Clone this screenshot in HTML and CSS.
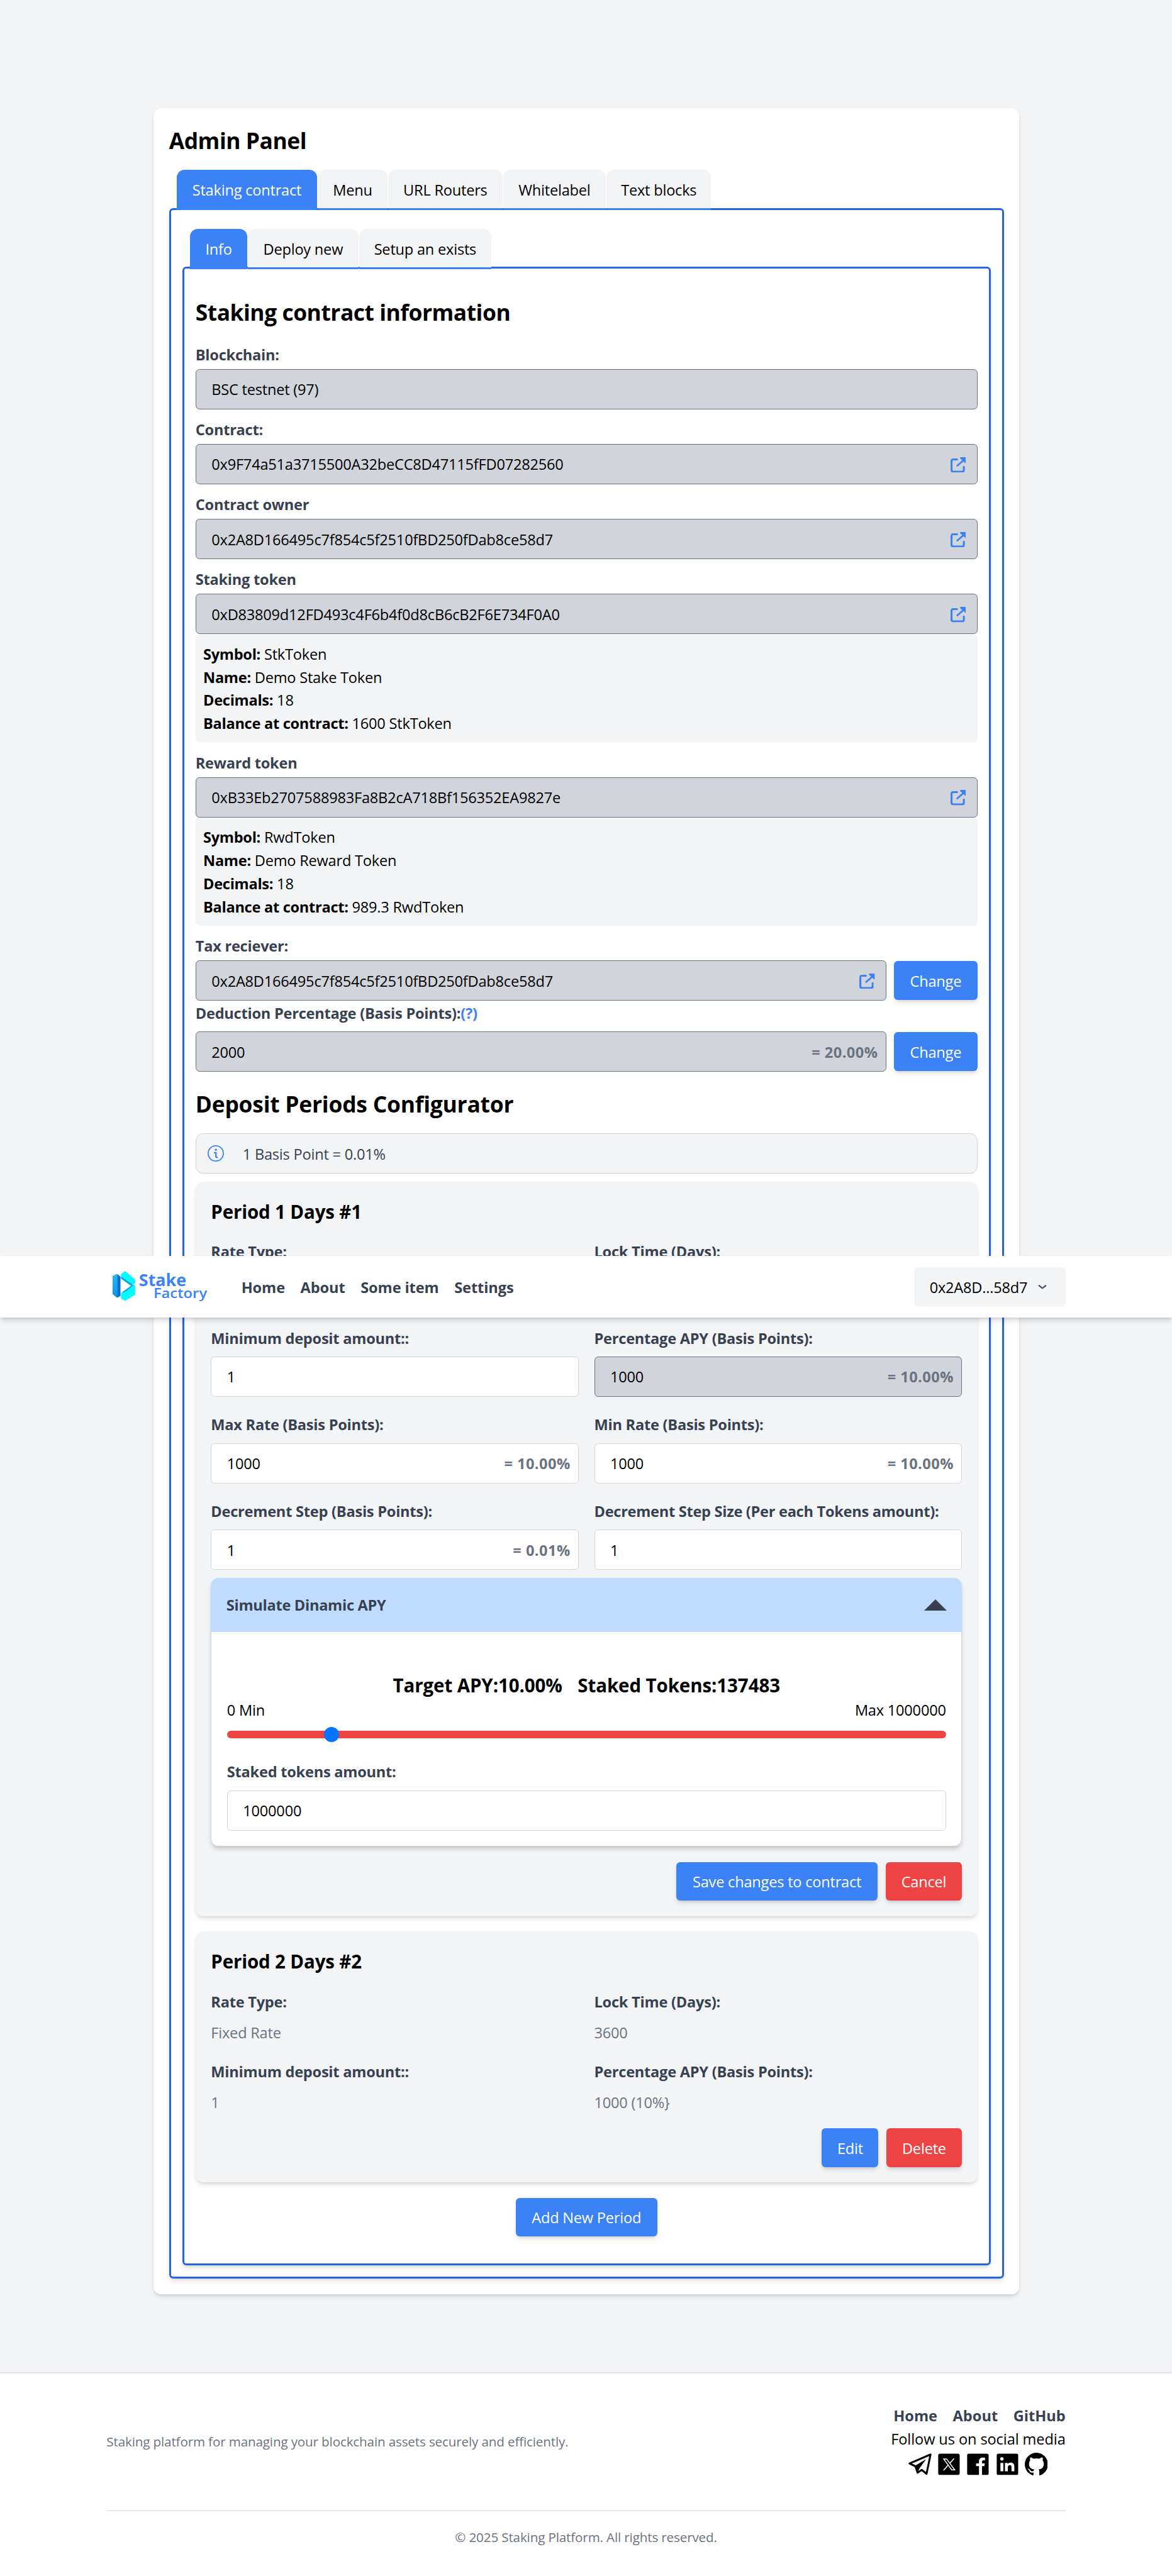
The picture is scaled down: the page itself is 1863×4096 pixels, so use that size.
FILE: index.html
```html
<!DOCTYPE html>
<html lang="en">
<head>
<meta charset="utf-8">
<title>Stake Factory - Admin Panel</title>
<link rel="stylesheet" href="styles.css">
</head>
<body>
<svg class="defs" width="0" height="0">
  <symbol id="ext" viewBox="0 0 32 32">
    <path d="M13.5 4.5H5.5Q2 4.500 2 8V26.500Q2 30 5.500 30H24Q27.500 30 27.500 26.500V20" fill="none" stroke="currentColor" stroke-width="4" stroke-linecap="round"/>
    <path d="M14 17.500L25 8" fill="none" stroke="currentColor" stroke-width="3.600" stroke-linecap="round"/>
    <path d="M21 0H30.500Q32 0 32 1.500V10.500Q32 12.600 30 11.600L20 2.600Q18.800 .6 21 0Z" fill="currentColor"/>
  </symbol>
</svg>

<header class="topbar">
  <div class="container topbar-row">
    <svg class="logo" viewBox="0 0 212 64">
      <defs><linearGradient id="lg" x1="0" y1="0" x2="0" y2="1"><stop offset="0" stop-color="#2ab4ee"/><stop offset=".55" stop-color="#12a8f0"/><stop offset="1" stop-color="#0f8fe0"/></linearGradient></defs>
      <path d="M12 9.800L8.300 6.200 0 10V48L8.300 54.800 11 55Z" fill="url(#lg)"/>
      <path d="M10 6.300L16.300 12V51.500L10 55Z" fill="#0b6fd2"/>
      <path d="M17.300 6.500L25.700 0 46.700 18V25L38 30.500 17.300 14Z" fill="#00fcff"/>
      <path d="M17.300 11.500L41.500 28.300 38 30.500 17.300 15.500Z" fill="#0fa3ea"/>
      <path d="M17.300 46L44.500 28.500 46.700 30V49L25.700 62 17.300 56.500Z" fill="#00fcff"/>
      <path d="M19.500 44L40.500 29 44 29 27 42.500 21 44.500Z" fill="#0fa3ea"/>
      <text x="54.500" y="31" class="logo-a" textLength="98" lengthAdjust="spacingAndGlyphs">Stake</text>
      <text x="84.500" y="55.700" class="logo-b" textLength="111" lengthAdjust="spacingAndGlyphs">Factory</text>
    </svg>
    <nav class="nav"><a>Home</a><a>About</a><a>Some item</a><a>Settings</a></nav>
    <button class="account"><span>0x2A8D...58d7</span><svg class="chev" viewBox="0 0 18 12"><path d="M2 3L9 8.500 16 3" fill="none" stroke="#4b5563" stroke-width="3" stroke-linecap="round" stroke-linejoin="round"/></svg></button>
  </div>
</header>

<main class="page">
  <section class="card">
    <h1 class="title">Admin Panel</h1>
    <div class="tabs tabs-outer">
      <button class="tab active">Staking contract</button><button class="tab">Menu</button><button class="tab">URL Routers</button><button class="tab">Whitelabel</button><button class="tab">Text blocks</button>
    </div>
    <div class="panel panel-outer">
      <div class="tabs tabs-inner">
        <button class="tab active">Info</button><button class="tab">Deploy new</button><button class="tab">Setup an exists</button>
      </div>
      <div class="panel panel-inner">
        <h2 class="title">Staking contract information</h2>

        <div class="field">
          <label class="label">Blockchain:</label>
          <div class="input off"><span>BSC testnet (97)</span></div>
        </div>
        <div class="field">
          <label class="label">Contract:</label>
          <div class="input off"><span>0x9F74a51a3715500A32beCC8D47115fFD07282560</span><svg class="ext"><use href="#ext"/></svg></div>
        </div>
        <div class="field">
          <label class="label">Contract owner</label>
          <div class="input off"><span>0x2A8D166495c7f854c5f2510fBD250fDab8ce58d7</span><svg class="ext"><use href="#ext"/></svg></div>
        </div>
        <div class="field">
          <label class="label">Staking token</label>
          <div class="input off"><span>0xD83809d12FD493c4F6b4f0d8cB6cB2F6E734F0A0</span><svg class="ext"><use href="#ext"/></svg></div>
          <div class="token">
            <p><b>Symbol:</b> StkToken</p>
            <p><b>Name:</b> Demo Stake Token</p>
            <p><b>Decimals:</b> 18</p>
            <p><b>Balance at contract:</b> 1600 StkToken</p>
          </div>
        </div>
        <div class="field">
          <label class="label">Reward token</label>
          <div class="input off"><span>0xB33Eb2707588983Fa8B2cA718Bf156352EA9827e</span><svg class="ext"><use href="#ext"/></svg></div>
          <div class="token">
            <p><b>Symbol:</b> RwdToken</p>
            <p><b>Name:</b> Demo Reward Token</p>
            <p><b>Decimals:</b> 18</p>
            <p><b>Balance at contract:</b> 989.3 RwdToken</p>
          </div>
        </div>
        <div>
          <label class="label">Tax reciever:</label>
          <div class="row">
            <div class="input off"><span>0x2A8D166495c7f854c5f2510fBD250fDab8ce58d7</span><svg class="ext"><use href="#ext"/></svg></div>
            <button class="btn change">Change</button>
          </div>
        </div>
        <div>
          <label class="label wide">Deduction Percentage (Basis Points):<a class="help">(?)</a></label>
          <div class="row">
            <div class="input off"><span>2000</span><b class="pct">= 20.00%</b></div>
            <button class="btn change">Change</button>
          </div>
        </div>

        <h2 class="title section">Deposit Periods Configurator</h2>
        <div class="note">
          <svg class="info" viewBox="0 0 34 34" fill="none" stroke="#3b82f6"><circle cx="17" cy="17" r="15.800" stroke-width="2.300"/><circle cx="17.200" cy="9.500" r="2.200" fill="#3b82f6" stroke="none"/><path d="M14.300 15.500H17.300V23.500Q17.300 25.500 20 25.300" stroke-width="3" stroke-linecap="round" stroke-linejoin="round"/></svg>
          <span>1 Basis Point = 0.01%</span>
        </div>

        <article class="period first">
          <h3 class="subtitle">Period 1 Days #1</h3>
          <div class="grid">
            <div><label class="label wide">Rate Type:</label><div class="input"></div></div>
            <div><label class="label wide">Lock Time (Days):</label><div class="input"></div></div>
            <div><label class="label wide">Minimum deposit amount::</label><div class="input"><span>1</span></div></div>
            <div><label class="label wide">Percentage APY (Basis Points):</label><div class="input off"><span>1000</span><b class="pct">= 10.00%</b></div></div>
            <div><label class="label wide">Max Rate (Basis Points):</label><div class="input"><span>1000</span><b class="pct">= 10.00%</b></div></div>
            <div><label class="label wide">Min Rate (Basis Points):</label><div class="input"><span>1000</span><b class="pct">= 10.00%</b></div></div>
            <div><label class="label wide">Decrement Step (Basis Points):</label><div class="input"><span>1</span><b class="pct">= 0.01%</b></div></div>
            <div><label class="label wide long">Decrement Step Size (Per each Tokens amount):</label><div class="input"><span>1</span></div></div>
          </div>
          <div class="sim">
            <div class="sim-head"><b>Simulate Dinamic APY</b><i class="tri"></i></div>
            <div class="sim-body">
              <div class="sim-title"><span>Target APY:10.00%</span><span>Staked Tokens:137483</span></div>
              <div class="limits"><span>0 Min</span><span>Max 1000000</span></div>
              <div class="track"><i class="thumb" style="margin-left:13.500%"></i></div>
              <label class="label wide">Staked tokens amount:</label>
              <div class="input"><span>1000000</span></div>
            </div>
          </div>
          <div class="actions"><button class="btn save">Save changes to contract</button><button class="btn red cancel">Cancel</button></div>
        </article>

        <article class="period">
          <h3 class="subtitle">Period 2 Days #2</h3>
          <div class="grid">
            <div><label class="label wide">Rate Type:</label><p class="value">Fixed Rate</p></div>
            <div><label class="label wide">Lock Time (Days):</label><p class="value">3600</p></div>
            <div><label class="label wide">Minimum deposit amount::</label><p class="value">1</p></div>
            <div><label class="label wide">Percentage APY (Basis Points):</label><p class="value">1000 (10%}</p></div>
          </div>
          <div class="actions"><button class="btn edit">Edit</button><button class="btn red delete">Delete</button></div>
        </article>

        <div class="center"><button class="btn add">Add New Period</button></div>
      </div>
    </div>
  </section>
</main>

<footer class="footer">
  <div class="container">
    <div class="foot-row">
      <p class="small">Staking platform for managing your blockchain assets securely and efficiently.</p>
      <div class="foot-right">
        <nav class="foot-nav"><a>Home</a><a>About</a><a>GitHub</a></nav>
        <p class="follow">Follow us on social media</p>
        <div class="social">
          <svg viewBox="0 0 48 48"><path d="M45.800 3.600L2.300 22.300 14.500 28 19 41.300 27.500 35.500 37.500 43.700Z" fill="none" stroke="#000" stroke-width="4" stroke-linejoin="round"/><path d="M36.500 13.300L13.500 27 18.500 42.500 22.800 32.500Z"/></svg>
          <svg viewBox="0 0 48 48"><rect x="1.800" y="2" width="44.400" height="44" rx="3.500"/><path d="M34.500 12L12.800 36.500" stroke="#fff" stroke-width="2.200"/><path d="M13.200 12.900H19.200L36 35.500H29.700Z" fill="#000" stroke="#fff" stroke-width="1.900"/></svg>
          <svg viewBox="0 0 48 48"><rect x="1.800" y="2" width="44.400" height="44" rx="3.500"/><path fill="#fff" d="M26.300 46.500V27.700H20.300V22H26.300V18C26.300 12.500 29.500 10.200 34 10.200H38.700V15.600H35.500C33 15.600 32.600 16.800 32.600 18.800V22H38.300L37.500 27.700H32.600V46.500Z"/></svg>
          <svg viewBox="0 0 48 48"><rect x="1.800" y="2" width="44.400" height="44" rx="3.500"/><circle cx="12.500" cy="12.700" r="3.500" fill="#fff"/><path fill="#fff" d="M9.500 21H15.500V38.300H9.500ZM18.800 21H24.400V23.400C25.600 21.500 27.700 20.600 30.300 20.600 36.300 20.600 38.300 24 38.300 29.500V38.300H32.400V30.500C32.400 27.500 31.800 25.800 29 25.800 26.200 25.800 24.800 27.300 24.800 30.500V38.300H18.800Z"/></svg>
          <svg viewBox="0 0 16 16"><path d="M8 0C3.580 0 0 3.580 0 8c0 3.540 2.290 6.530 5.470 7.590.4.070.55-.17.55-.38 0-.19-.01-.82-.01-1.490-2.010.37-2.530-.49-2.690-.94-.09-.23-.48-.94-.82-1.130-.28-.15-.68-.52-.01-.53.63-.01 1.080.58 1.230.82.72 1.210 1.870.87 2.330.66.07-.52.28-.87.51-1.070-1.780-.2-3.640-.89-3.640-3.950 0-.87.31-1.590.82-2.150-.08-.2-.36-1.020.08-2.120 0 0 .67-.21 2.200.82.64-.18 1.320-.27 2-.27s1.360.09 2 .27c1.530-1.040 2.200-.82 2.200-.82.44 1.100.16 1.920.08 2.120.51.56.82 1.270.82 2.150 0 3.070-1.870 3.750-3.650 3.950.29.25.54.73.54 1.480 0 1.070-.01 1.930-.01 2.200 0 .21.15.46.55.38A8.010 8.010 0 0 0 16 8c0-4.420-3.580-8-8-8"/></svg>
        </div>
      </div>
    </div>
    <p class="copy small">© 2025 Staking Platform. All rights reserved.</p>
  </div>
</footer>
</body>
</html>
```

FILE: styles.css
```css
*, *::before, *::after { box-sizing: border-box; margin: 0; padding: 0; }
html { font-size: 24.574px; }
body {
  position: relative;
  height: 4096px;
  background: #f3f4f6;
  font: 400 .96rem/1.5rem "Open Sans", "Noto Sans", sans-serif;
  letter-spacing: -.009em;
  color: #000;
  overflow-x: hidden;
}
b { font-weight: 700; letter-spacing: -.012em; }
button { border: 0; font: inherit; letter-spacing: inherit; color: inherit; white-space: nowrap; }
svg { display: block; flex: none; }
.defs { position: absolute; }
.container { width: 62.030rem; margin: 0 auto; }

/* top bar */
.topbar {
  position: absolute; z-index: 10; top: 1997px; left: 0; right: 0;
  height: 98px; background: #fff;
  box-shadow: 0 6px 9px -1px rgba(0,0,0,.12), 0 3px 6px -2px rgba(0,0,0,.12);
}
.topbar-row { display: flex; align-items: center; height: 100%; padding-left: 9.500px; }
.logo { width: 162.800px; height: 49.150px; overflow: visible; }
.logo-a, .logo-b { font-family: "Open Sans", sans-serif; fill: #3b82f6; letter-spacing: 0; }
.logo-a { font-size: 36px; font-weight: 700; }
.logo-b { font-size: 27px; font-weight: 600; }
.nav { display: flex; gap: 1rem; margin-left: 42px; padding-top: 2px; font-weight: 700; letter-spacing: -.004em; color: #374151; }
.account {
  display: flex; align-items: center; justify-content: space-between;
  margin-left: auto; width: 240.500px; height: 2.5rem; padding: 2px 30px 0 24.500px;
  background: #f3f4f6; border-radius: .25rem;
}
.chev { width: 14px; height: 9px; margin-bottom: 1px; }

/* admin card */
.page { padding: 172px 0 124px 1.500px; }
.card {
  width: 56rem; margin: 0 auto; padding: 1rem;
  background: #fff; border-radius: .5rem;
  box-shadow: 0 5px 8px -1px rgba(0,0,0,.1), 0 3px 5px -2px rgba(0,0,0,.1);
}
.title { padding-top: 2px; margin-bottom: calc(1rem - 2px); font-size: 1.440rem; line-height: 2rem; font-weight: 700; letter-spacing: -.013em; }
.tabs { position: relative; display: flex; gap: 1px; }
.tab {
  height: 64px; padding: 3px 0 0; text-align: center;
  background: #f3f4f6; border-bottom: 3px solid #3b82f6;
  border-radius: .5rem .5rem 0 0;
}
.tab.active { background: #3b82f6; color: #fff; }
.tabs-outer { display: grid; grid-template-columns: 222.900px 111.200px 181.500px 163.600px 166.200px; margin: 0 0 -3px .5rem; }
.tabs-inner { display: grid; grid-template-columns: 91.200px 175.300px 210.800px; margin: 0 0 -4px .5rem; }
.panel {
  border: 3px solid #2563eb; border-radius: .25rem;
  box-shadow: 0 5px 8px -1px rgba(0,0,0,.1), 0 3px 5px -2px rgba(0,0,0,.1);
}
.panel-outer { padding: 30px 18px 18px; }
.panel-inner { padding: 42.600px 18px; background: #fff; }

/* fields */
.field { margin-bottom: .5rem; }
.label {
  display: block; padding-top: 2px; margin-bottom: calc(.25rem - 2px);
  font-weight: 700; letter-spacing: -.010em; color: #374151; white-space: nowrap;
}
.label.wide { margin-bottom: calc(.5rem - 2px); }
.label.long { letter-spacing: -.012em; }
.help { color: #3b82f6; }
.input {
  display: flex; align-items: center; justify-content: space-between; flex: 1;
  height: 64px; padding: 2px .5rem 0 24.500px;
  background: #fff; border: 1px solid #d1d5db; border-radius: .25rem;
  white-space: nowrap;
}
.input.off { background: #d1d5db; border-color: #6b7280; }
.pct { color: #6b7280; letter-spacing: .020em; }
.ext { width: 1rem; height: 1rem; margin-right: 5px; color: #3b82f6; }
.token { padding: calc(.5rem + 1px) .5rem calc(.5rem - 1px); background: #f3f4f6; border-radius: .25rem; }
.row { display: flex; align-items: center; gap: .5rem; }

.btn {
  height: 2.5rem; padding: 2px 0 0; text-align: center;
  background: #3b82f6; color: #fff; border-radius: .25rem;
  box-shadow: 0 5px 8px -1px rgba(0,0,0,.1), 0 3px 5px -2px rgba(0,0,0,.1);
}
.red { background: #ef4444; }
.change { width: 132.700px; }
.save { width: 320.500px; }
.cancel { width: 121.500px; }
.edit { width: 90px; }
.delete { width: 120.500px; }
.add { width: 225px; }

/* deposit periods */
.section { margin-top: 1rem; letter-spacing: -.006em; }
.note {
  display: flex; align-items: center; gap: 30px;
  height: 64px; padding: 2px 18px 0; margin-bottom: .5rem;
  background: #f3f4f6; border: 1px solid #d1d5db; border-radius: .5rem;
  color: #374151; box-shadow: 0 1px 3px rgba(0,0,0,.06);
}
.info { width: 26px; height: 26px; margin-bottom: 3px; }
.period {
  padding: 1rem; margin-bottom: 1rem;
  background: #f3f4f6; border-radius: .5rem;
  box-shadow: 0 5px 8px -1px rgba(0,0,0,.1), 0 3px 5px -2px rgba(0,0,0,.1);
}
.subtitle { padding-top: 1.500px; margin-bottom: calc(1rem - 1.500px); font-size: 1.200rem; line-height: 1.750rem; font-weight: 700; letter-spacing: -.005em; }
.first .subtitle { margin-bottom: calc(1rem - 2.300px); }
.grid { display: grid; grid-template-columns: 1fr 1fr; gap: 1rem; }
.value { padding-top: 1.500px; margin-bottom: -1.500px; color: #6b7280; }
.actions { display: flex; justify-content: flex-end; gap: .5rem; margin-top: 1rem; }

.sim {
  margin-top: .5rem; background: #fff; border-radius: .5rem;
  box-shadow: 0 5px 8px -1px rgba(0,0,0,.14), 0 3px 5px -2px rgba(0,0,0,.12);
}
.sim-head {
  display: flex; align-items: center; justify-content: space-between;
  height: 3.500rem; padding: 1px 1rem 0; color: #374151;
  background: #bfdbfe; border-radius: .5rem .5rem 0 0;
}
.tri { border: solid transparent; border-width: 0 18.400px 18.400px; border-bottom-color: #374151; }
.sim-body { padding: 62px 24.500px 24.600px; border: 1px solid #d1d5db; border-top: 0; border-radius: 0 0 .5rem .5rem; }
.sim-title { display: flex; justify-content: center; gap: 1rem; padding-top: 1px; margin-bottom: -1px; font-size: 1.200rem; line-height: 1.750rem; font-weight: 700; letter-spacing: -.003em; }
.limits { display: flex; justify-content: space-between; padding-top: 1px; margin-bottom: -1px; }
.track { display: flex; align-items: center; height: 12.300px; margin: 15.500px 0 33.200px; background: #ef4444; border-radius: 6px; }
.thumb { width: 24px; height: 24px; border-radius: 50%; background: #0075ff; }
.center { text-align: center; height: 2.500rem; }

/* footer */
.footer { height: 324.500px; padding-top: 1.950rem; background: #fff; border-top: 2px solid #e5e7eb; }
.foot-row { display: flex; align-items: center; justify-content: space-between; height: 171.200px; padding-bottom: 48.500px; border-bottom: 2px solid #e5e7eb; }
.small { padding-top: 1px; font-size: .840rem; line-height: 1.250rem; color: #6b7280; letter-spacing: -.007em; }
.foot-right { display: flex; flex-direction: column; align-items: flex-end; }
.foot-nav { display: flex; gap: 1rem; padding-top: 2px; margin-bottom: -2px; font-weight: 700; letter-spacing: 0; color: #374151; }
.follow { padding-top: 2px; margin-bottom: -2px; letter-spacing: -.004em; }
.social { display: flex; align-items: center; align-self: center; gap: 9.200px; height: 47px; }
.social svg { width: 1.500rem; height: 1.500rem; }
.copy { padding-top: 1.070rem; text-align: center; }
```
